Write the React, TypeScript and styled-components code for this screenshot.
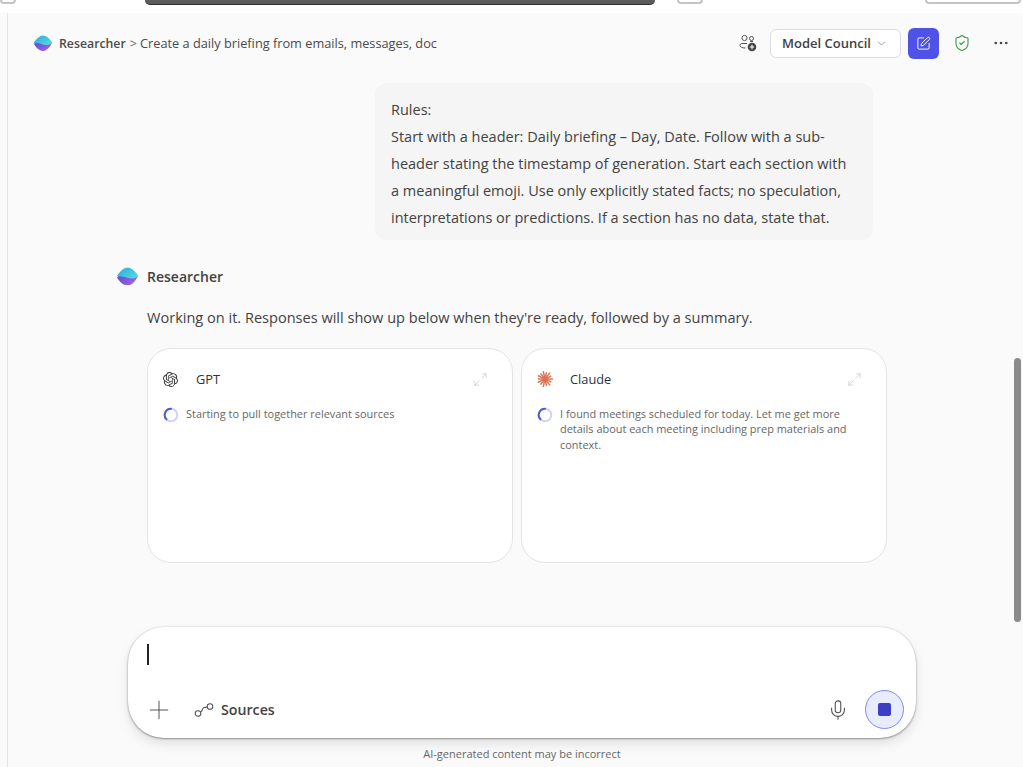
import React from 'react'
import styled, { createGlobalStyle } from 'styled-components'
import { ChevronDown, Ellipsis, Maximize2, Mic, Plus, ShieldCheck, SquarePen } from 'lucide-react'
import { SiOpenai } from 'react-icons/si'

const GlobalStyle = createGlobalStyle`
    html, body {
        margin: 0;
        height: 100%;
        overflow: hidden;
        background: #fafafa;
    }
    body {
        font-family: 'Open Sans', 'Noto Sans', sans-serif;
        color: #424242;
    }
`

const Logo: React.FC<{ size: number; id: string }> = ({ size, id }) => (
    <svg width={size} height={size * 0.82} viewBox="0 0 22 18" style={{ flex: 'none' }}>
        <defs>
            <linearGradient id={`${id}-top`} x1="0" y1="0" x2="1" y2="0.6">
                <stop offset="0" stopColor="#2aa8dc" />
                <stop offset="1" stopColor="#54d6dc" />
            </linearGradient>
            <linearGradient id={`${id}-bot`} x1="0" y1="0" x2="1" y2="0.5">
                <stop offset="0" stopColor="#5a4fd8" />
                <stop offset="1" stopColor="#a35fe0" />
            </linearGradient>
        </defs>
        <path d="M1 10C3 7.5 6 7 11 8.5C15 9.5 18.500 9.500 21 8C19 13 15.500 17.500 11 17.500C6.500 17.500 3.500 14 1 10Z" fill={`url(#${id}-bot)`} />
        <path d="M0.500 9C4 4 7.500 0.500 11 0.500C15 0.500 18.500 4.500 21.500 8.500C18.500 11 15 11.500 11 10.300C7 9.200 3.500 8.700 0.500 9Z" fill={`url(#${id}-top)`} />
    </svg>
)

const AddPeopleIcon = () => (
    <svg width="18" height="18" viewBox="0 0 18 18" fill="none" stroke="#555" strokeWidth="1">
        <circle cx="5.500" cy="4" r="2.600" />
        <circle cx="12.500" cy="4.500" r="2" />
        <path d="M8 9.500H3C1.800 9.500 1 10.300 1 11.300C1 13 3 14 6.500 14" />
        <path d="M11 7.500H14" />
        <circle cx="13" cy="13" r="4.300" fill="#444" stroke="none" />
        <path d="M13 10.800V15.200M10.800 13H15.200" stroke="#fff" strokeWidth="1.100" />
    </svg>
)

const SourcesIcon = () => (
    <svg width="20" height="14" viewBox="0 0 20 14" fill="none" stroke="#555" strokeWidth="1.100">
        <circle cx="4" cy="10.500" r="2.800" />
        <circle cx="16" cy="3.500" r="2.800" />
        <path d="M6.500 9C8.500 8.500 8.500 4.800 10 4.500C11 4.300 12 4.500 13.200 4" />
    </svg>
)

const ClaudeIcon = () => (
    <svg width="16" height="16" viewBox="0 0 16 16" stroke="#dc7256" strokeWidth="1.500" strokeLinecap="round">
        <circle cx="8" cy="8" r="2.500" fill="#dc7256" stroke="none" />
        {Array.from({ length: 14 }).map((_, i) => {
            const a = (i / 14) * Math.PI * 2
            return (
                <line
                    key={i}
                    x1={8 + Math.cos(a) * 1.500}
                    y1={8 + Math.sin(a) * 1.500}
                    x2={8 + Math.cos(a) * (i % 2 ? 6.500 : 7.500)}
                    y2={8 + Math.sin(a) * (i % 2 ? 6.500 : 7.500)}
                />
            )
        })}
    </svg>
)

const Spinner = () => (
    <SpinnerSvg width="16" height="16" viewBox="0 0 16 16" fill="none">
        <circle cx="8" cy="8" r="6.300" stroke="#cfd3fb" strokeWidth="2" />
        <path d="M8 1.700A6.300 6.300 0 0 0 3.500 12.400" stroke="#4f5bd5" strokeWidth="2" strokeLinecap="round" />
    </SpinnerSvg>
)

const cards = [
    {
        name: 'GPT',
        icon: <SiOpenai size={15} color="#3a3a3a" />,
        text: 'Starting to pull together relevant sources',
    },
    {
        name: 'Claude',
        icon: <ClaudeIcon />,
        text: 'I found meetings scheduled for today. Let me get more details about each meeting including prep materials and context.',
    },
]

export default function App() {
    return (
        <>
            <GlobalStyle />
            <Page>
                <TopStrip>
                    <CutOffRing $width={16} $gap={0} />
                    <DarkPill />
                    <CutOffRing $width={26} $gap={22} />
                    <CutOffTab />
                </TopStrip>
                <Panel>
                    <Header>
                        <Crumbs>
                            <Logo size={20} id="head" />
                            <CrumbStrong>Researcher</CrumbStrong>
                            <CrumbSep>&gt;</CrumbSep>
                            <span>Create a daily briefing from emails, messages, doc</span>
                        </Crumbs>
                        <Actions>
                            <AddPeopleIcon />
                            <CouncilButton>
                                Model Council
                                <ChevronDown size={13} color="#777" strokeWidth={1.300} />
                            </CouncilButton>
                            <NewChatButton>
                                <SquarePen size={15} color="#fff" strokeWidth={1.500} />
                            </NewChatButton>
                            <ShieldCheck size={18} color="#3f9e46" strokeWidth={1.500} />
                            <Ellipsis size={18} color="#444" strokeWidth={1.600} />
                        </Actions>
                    </Header>
                    <Thread>
                        <Bubble>
                            Rules:
                            <br />
                            Start with a header: Daily briefing – Day, Date. Follow with a sub-
                            <br />
                            header stating the timestamp of generation. Start each section with
                            <br />
                            a meaningful emoji. Use only explicitly stated facts; no speculation,
                            <br />
                            interpretations or predictions. If a section has no data, state that.
                        </Bubble>
                        <AgentRow>
                            <Logo size={23} id="agent" />
                            <AgentName>Researcher</AgentName>
                        </AgentRow>
                        <Status>Working on it. Responses will show up below when they're ready, followed by a summary.</Status>
                        <Cards>
                            {cards.map((card) => (
                                <Card key={card.name}>
                                    <CardHead>
                                        <CardIcon>{card.icon}</CardIcon>
                                        <CardName>{card.name}</CardName>
                                        <Maximize2 size={15} color="#c4c4c4" strokeWidth={1.100} />
                                    </CardHead>
                                    <CardBody>
                                        <Spinner />
                                        <CardText>{card.text}</CardText>
                                    </CardBody>
                                </Card>
                            ))}
                        </Cards>
                    </Thread>
                    <Composer>
                        <Caret />
                        <ComposerBar>
                            <PlusSlot>
                                <Plus size={30} color="#555" strokeWidth={0.800} />
                            </PlusSlot>
                            <SourcesButton>
                                <SourcesIcon />
                                Sources
                            </SourcesButton>
                            <Spacer />
                            <Mic size={22} color="#555" strokeWidth={1.200} />
                            <StopButton>
                                <StopSquare />
                            </StopButton>
                        </ComposerBar>
                    </Composer>
                    <Disclaimer>AI-generated content may be incorrect</Disclaimer>
                </Panel>
                <ScrollThumb />
            </Page>
        </>
    )
}

const Page = styled.div`
    position: relative;
    width: 1023px;
    height: 767px;
    overflow: hidden;
    background: #fafafa;
`

const TopStrip = styled.div`
    display: flex;
    align-items: flex-start;
    height: 13px;
    background: #fff;
    overflow: hidden;
`

const DarkPill = styled.div`
    width: 510px;
    height: 5px;
    flex: none;
    margin-left: 129px;
    box-sizing: border-box;
    background: #5c5c5c;
    border-bottom: 1px solid #2e2e2e;
    border-radius: 0 0 10px 10px;
`

const CutOffRing = styled.div<{ $width: number; $gap: number }>`
    width: ${({ $width }) => $width}px;
    margin-left: ${({ $gap }) => $gap}px;
    height: 4px;
    flex: none;
    box-sizing: border-box;
    border: 2px solid #c4c4c4;
    border-top: 0;
    border-radius: 0 0 14px 14px;
`

const CutOffTab = styled.div`
    width: 96px;
    height: 4px;
    flex: none;
    margin-left: 222px;
    box-sizing: border-box;
    border: 2px solid #c4c4c4;
    border-top: 0;
    border-radius: 0 0 8px 8px;
`

const Panel = styled.div`
    margin-left: 7px;
    height: 754px;
    border-left: 1px solid #e6e6e6;
    box-sizing: border-box;
`

const Header = styled.header`
    display: flex;
    align-items: center;
    justify-content: space-between;
    height: 60px;
    padding: 0 13px 0 25px;
`

const Crumbs = styled.div`
    display: flex;
    align-items: center;
    font-size: 12.75px;
    color: #4a4a4a;
    white-space: nowrap;
`

const CrumbStrong = styled.span`
    font-size: 12.3px;
    font-weight: 600;
    margin-left: 6px;
`

const CrumbSep = styled.span`
    margin: 0 3px 0 4px;
    color: #666;
`

const Actions = styled.div`
    display: flex;
    align-items: center;
    gap: 8px;

    & > svg:first-child {
        margin-right: 5px;
    }
    & > svg:nth-child(4) {
        margin: 0 13px 0 6px;
    }
`

const CouncilButton = styled.button`
    display: flex;
    align-items: center;
    justify-content: space-between;
    width: 131px;
    height: 29px;
    padding: 0 12px 0 11px;
    margin-right: -1px;
    background: #fff;
    border: 1px solid #dcdcdc;
    border-radius: 6px;
    font: 600 13px 'Open Sans', sans-serif;
    color: #424242;
`

const NewChatButton = styled.button`
    display: flex;
    align-items: center;
    justify-content: center;
    width: 31px;
    height: 31px;
    padding: 0;
    background: #4f52e8;
    border: 0;
    border-radius: 6px;
`

const Thread = styled.main`
    padding-left: 139px;
    padding-top: 10px;
    height: 554px;
    box-sizing: border-box;
`

const Bubble = styled.div`
    width: 498px;
    height: 157px;
    box-sizing: border-box;
    margin-left: 228px;
    padding: 13px 16px;
    background: #f5f5f5;
    border-radius: 12px;
    font-size: 14.5px;
    line-height: 27px;
    color: #424242;
    white-space: nowrap;
`

const AgentRow = styled.div`
    display: flex;
    align-items: center;
    gap: 8px;
    margin: 26px 0 0 -31px;
    height: 20px;
`

const AgentName = styled.span`
    font-size: 14px;
    font-weight: 600;
`

const Status = styled.p`
    margin: 20px 0 0;
    font-size: 14.55px;
    line-height: 22px;
    white-space: nowrap;
`

const Cards = styled.div`
    display: grid;
    grid-template-columns: 366px 366px;
    gap: 8px;
    margin-top: 20px;
`

const Card = styled.section`
    height: 215px;
    box-sizing: border-box;
    padding: 21px 24px 0 15px;
    background: #fff;
    border: 1px solid #e4e4e4;
    border-radius: 24px;
`

const CardHead = styled.div`
    display: flex;
    align-items: center;
    height: 18px;
`

const CardIcon = styled.span`
    display: flex;
    width: 33px;
`

const CardName = styled.span`
    flex: 1;
    font-size: 12.8px;
    color: #333;
`

const CardBody = styled.div`
    display: flex;
    gap: 7px;
    margin-top: 18px;
`

const SpinnerSvg = styled.svg`
    flex: none;
    margin-top: 1px;
`

const CardText = styled.p`
    margin: 0;
    font-size: 10.95px;
    line-height: 15.300px;
    color: #666;
`

const Composer = styled.div`
    width: 788px;
    height: 111px;
    box-sizing: border-box;
    margin-left: 120px;
    padding: 17px 12px 9px 19px;
    display: flex;
    flex-direction: column;
    justify-content: space-between;
    background: #fff;
    border-radius: 36px;
    box-shadow: 0 1px 2px rgba(0, 0, 0, 0.35), 0 6px 12px rgba(0, 0, 0, 0.1), 0 0 2px rgba(0, 0, 0, 0.15);
`

const Caret = styled.div`
    width: 2px;
    height: 21px;
    background: #222;
`

const ComposerBar = styled.div`
    display: flex;
    align-items: center;
`

const PlusSlot = styled.span`
    display: flex;
    margin-left: -3px;
`

const SourcesButton = styled.span`
    display: flex;
    align-items: center;
    gap: 7px;
    margin-left: 20px;
    font-size: 14.2px;
    font-weight: 600;
    color: #444;
`

const Spacer = styled.div`
    flex: 1;
`

const StopButton = styled.div`
    display: flex;
    align-items: center;
    justify-content: center;
    width: 39px;
    height: 39px;
    margin-left: 16px;
    box-sizing: border-box;
    background: #e9ecfd;
    border: 1px solid #8088f5;
    border-radius: 50%;
`

const StopSquare = styled.div`
    width: 13px;
    height: 13px;
    background: #3d3fc4;
    border-radius: 2px;
`

const Disclaimer = styled.p`
    width: 788px;
    margin: 9px 0 0 120px;
    text-align: center;
    font-size: 11px;
    line-height: 14px;
    color: #666;
`

const ScrollThumb = styled.div`
    position: absolute;
    left: 1014px;
    top: 358px;
    width: 7px;
    height: 264px;
    background: #8a8a8a;
    border-radius: 4px;
`
